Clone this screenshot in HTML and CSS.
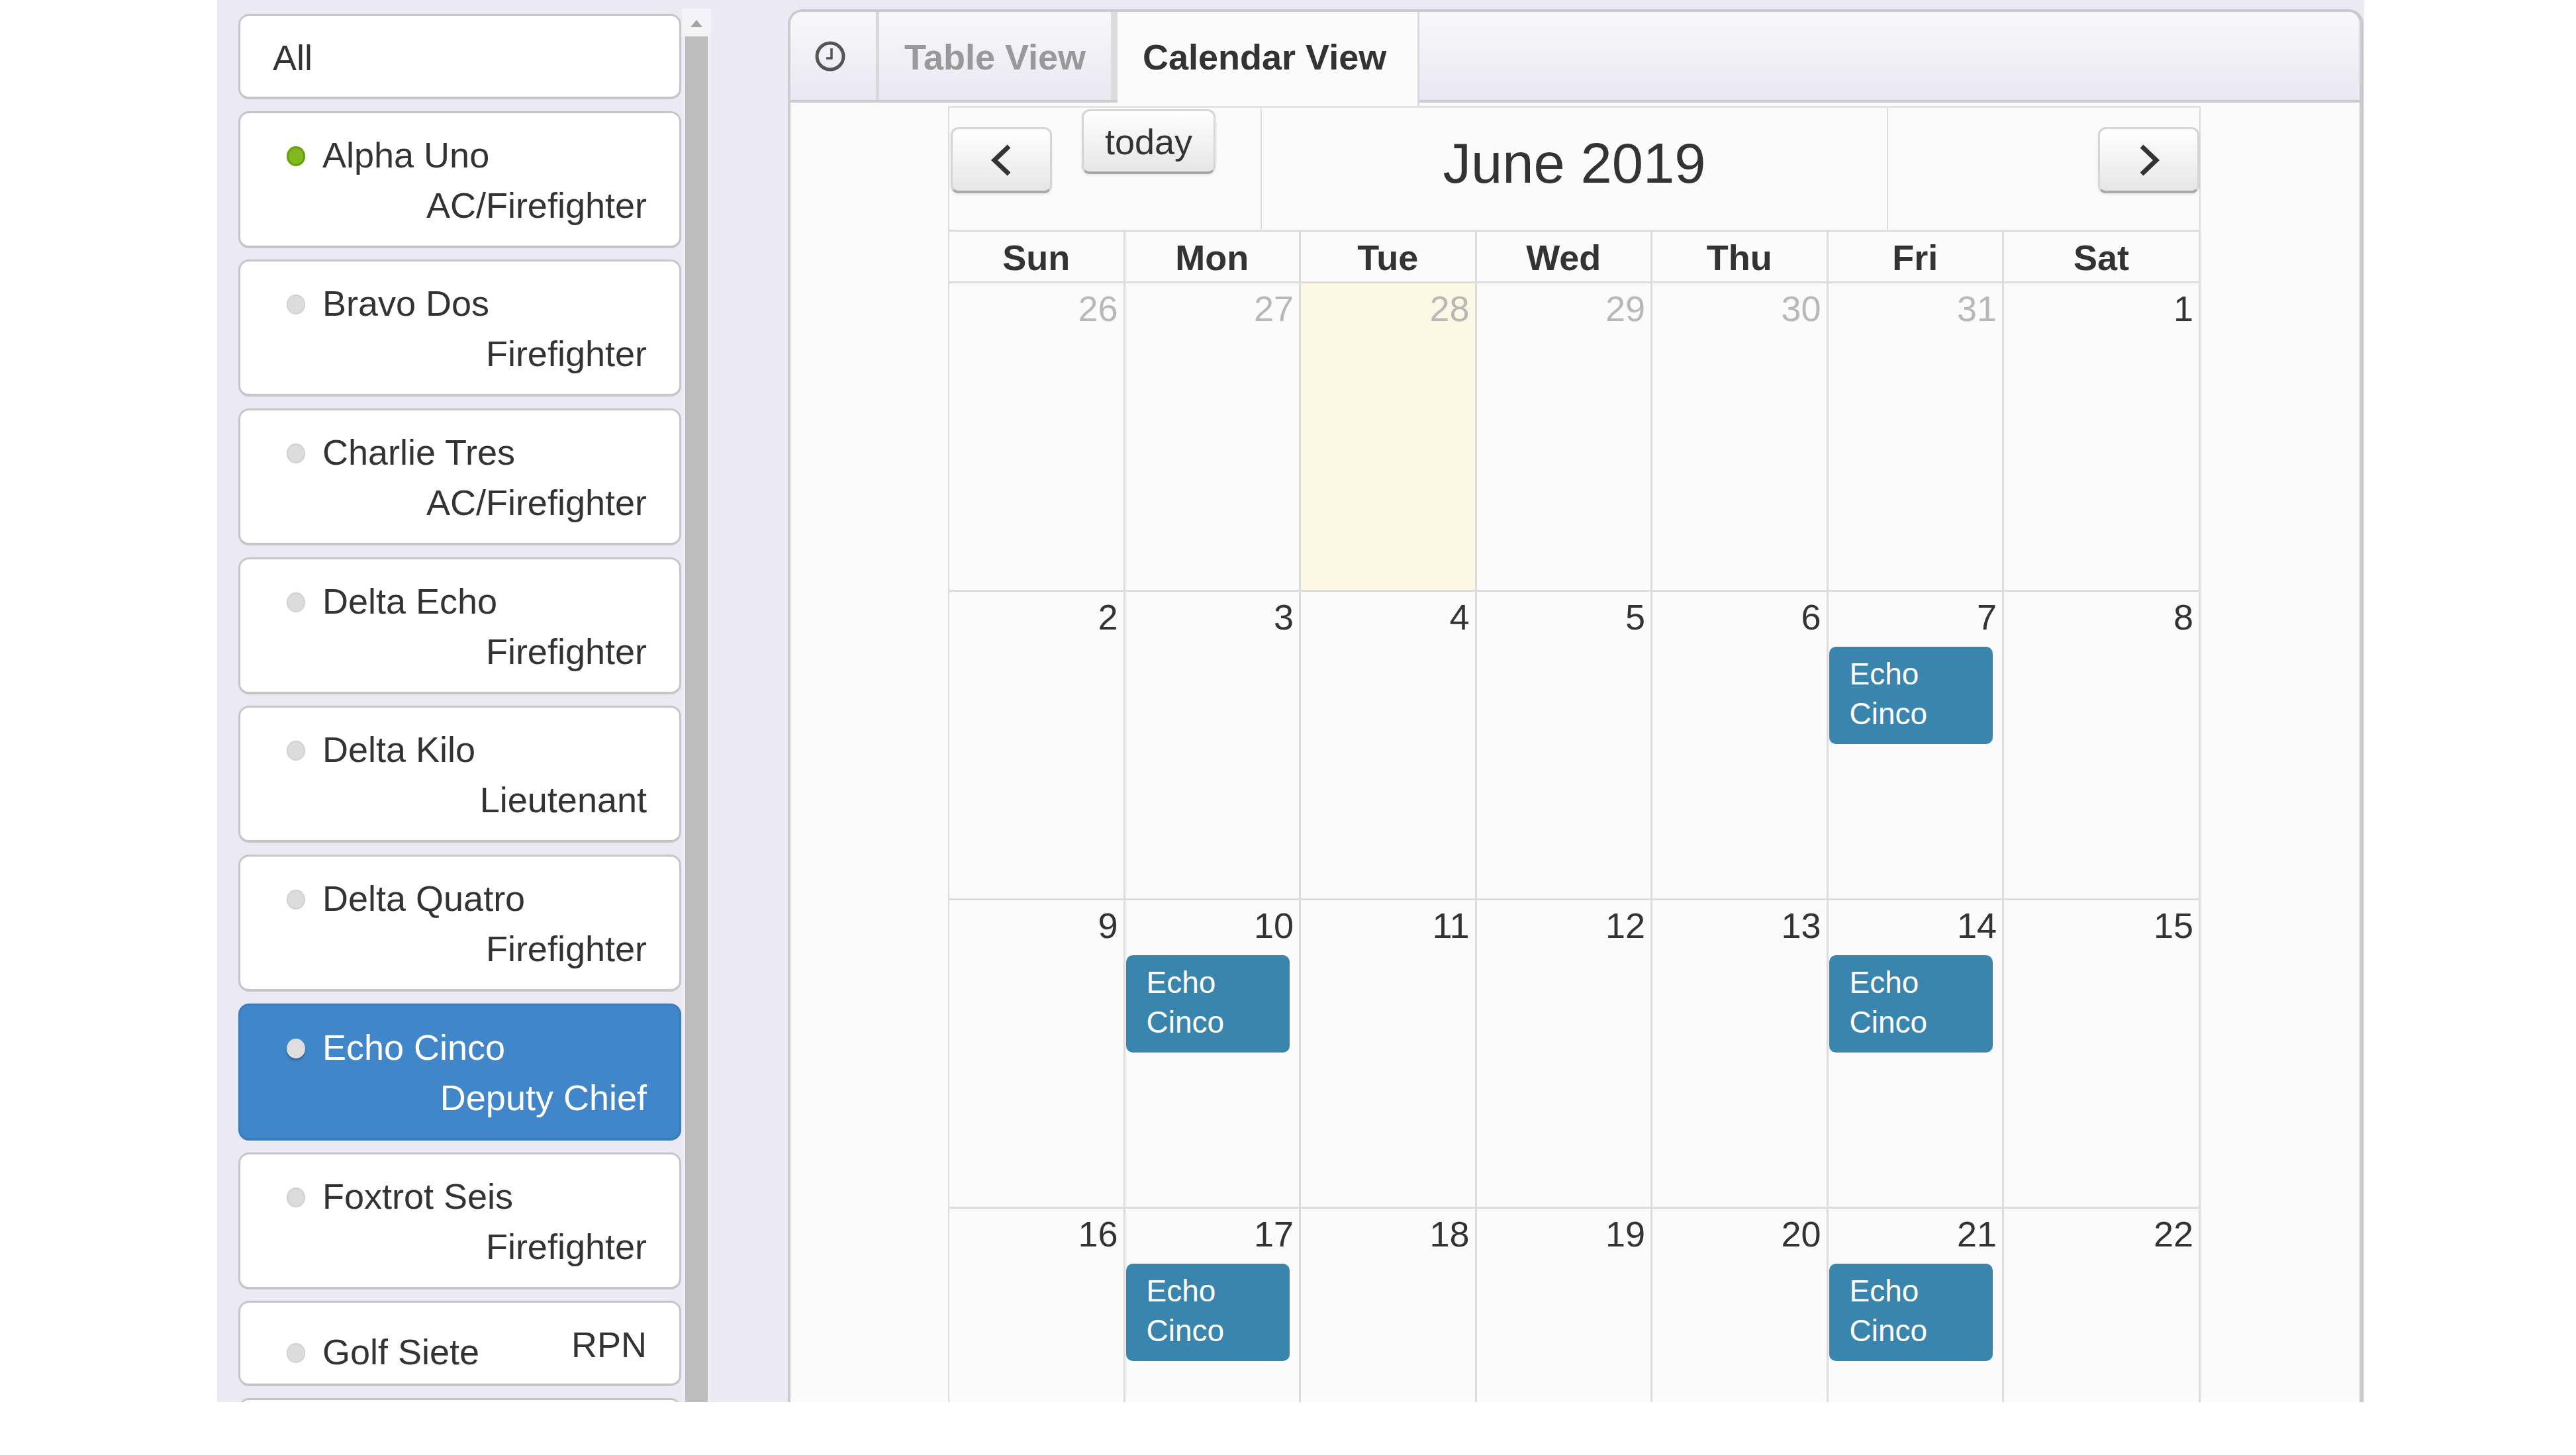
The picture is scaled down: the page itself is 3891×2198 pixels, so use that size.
FILE: index.html
```html
<!DOCTYPE html>
<html lang="en">
<head>
    <meta charset="UTF-8">
    <meta name="viewport" content="width=device-width, initial-scale=1.0">
    <title>Schedule</title>
    <link rel="stylesheet" href="styles.css">
</head>
<body>

    <div class="app">
        <div class="people">
            <div class="person person-inline"><span>All</span></div>

            <div class="person">
                <div class="name-row"><span class="dot dot-on"></span><span>Alpha Uno</span></div>
                <div class="role">AC/Firefighter</div>
            </div>
            <div class="person">
                <div class="name-row"><span class="dot"></span><span>Bravo Dos</span></div>
                <div class="role">Firefighter</div>
            </div>
            <div class="person">
                <div class="name-row"><span class="dot"></span><span>Charlie Tres</span></div>
                <div class="role">AC/Firefighter</div>
            </div>
            <div class="person">
                <div class="name-row"><span class="dot"></span><span>Delta Echo</span></div>
                <div class="role">Firefighter</div>
            </div>
            <div class="person">
                <div class="name-row"><span class="dot"></span><span>Delta Kilo</span></div>
                <div class="role">Lieutenant</div>
            </div>
            <div class="person">
                <div class="name-row"><span class="dot"></span><span>Delta Quatro</span></div>
                <div class="role">Firefighter</div>
            </div>
            <div class="person person-selected">
                <div class="name-row"><span class="dot"></span><span>Echo Cinco</span></div>
                <div class="role">Deputy Chief</div>
            </div>
            <div class="person">
                <div class="name-row"><span class="dot"></span><span>Foxtrot Seis</span></div>
                <div class="role">Firefighter</div>
            </div>
            <div class="person person-inline">
                <div class="name-row"><span class="dot"></span><span>Golf Siete</span></div>
                <div>RPN</div>
            </div>
            <div class="person person-inline"></div>
        </div>

        <div class="scrollbar">
            <div class="scroll-up"><span class="scroll-arrow"></span></div>
            <div class="scroll-thumb"></div>
        </div>

        <div class="panel">
            <div class="tabs">
                <div class="tab-icon">
                    <svg class="clock" viewBox="0 0 46 46">
                        <circle cx="23" cy="23" r="20" fill="none" stroke="#555" stroke-width="5"/>
                        <path d="M25 11V26H17" fill="none" stroke="#555" stroke-width="3.5"/>
                    </svg>
                </div>
                <div class="tab">Table View</div>
                <div class="tab tab-active">Calendar View</div>
            </div>

            <div class="calendar">
                <div class="toolbar">
                    <div class="toolbar-left">
                        <button class="btn btn-nav">
                            <svg class="chevron" viewBox="0 0 36 50"><path d="M29 4L7 25L29 46" fill="none" stroke="#333" stroke-width="7"/></svg>
                        </button>
                        <button class="btn btn-today">today</button>
                    </div>
                    <div class="toolbar-title">June 2019</div>
                    <div class="toolbar-right">
                        <button class="btn btn-nav">
                            <svg class="chevron" viewBox="0 0 36 50"><path d="M7 4L29 25L7 46" fill="none" stroke="#333" stroke-width="7"/></svg>
                        </button>
                    </div>
                </div>

                <div class="cal-row cal-head">
                    <div class="cell">Sun</div>
                    <div class="cell">Mon</div>
                    <div class="cell">Tue</div>
                    <div class="cell">Wed</div>
                    <div class="cell">Thu</div>
                    <div class="cell">Fri</div>
                    <div class="cell">Sat</div>
                </div>

                <div class="cal-row week">
                    <div class="cell other">26</div>
                    <div class="cell other">27</div>
                    <div class="cell other today">28</div>
                    <div class="cell other">29</div>
                    <div class="cell other">30</div>
                    <div class="cell other">31</div>
                    <div class="cell">1</div>
                </div>
                <div class="cal-row week">
                    <div class="cell">2</div>
                    <div class="cell">3</div>
                    <div class="cell">4</div>
                    <div class="cell">5</div>
                    <div class="cell">6</div>
                    <div class="cell">7<div class="event">Echo Cinco</div></div>
                    <div class="cell">8</div>
                </div>
                <div class="cal-row week">
                    <div class="cell">9</div>
                    <div class="cell">10<div class="event">Echo Cinco</div></div>
                    <div class="cell">11</div>
                    <div class="cell">12</div>
                    <div class="cell">13</div>
                    <div class="cell">14<div class="event">Echo Cinco</div></div>
                    <div class="cell">15</div>
                </div>
                <div class="cal-row week">
                    <div class="cell">16</div>
                    <div class="cell">17<div class="event">Echo Cinco</div></div>
                    <div class="cell">18</div>
                    <div class="cell">19</div>
                    <div class="cell">20</div>
                    <div class="cell">21<div class="event">Echo Cinco</div></div>
                    <div class="cell">22</div>
                </div>
            </div>
        </div>
    </div>

</body>
</html>
```

FILE: styles.css
```css
* {
    box-sizing: border-box;
}
body {
    margin: 0;
    background: #fff;
    font-family: "Liberation Sans", Arial, sans-serif;
    font-size: 54px;
    color: #333;
}
.app {
    display: flex;
    align-items: flex-start;
    width: 3243px;
    height: 2118px;
    margin-left: 328px;
    background: #ebeaf4;
    overflow: hidden;
}

/* people list */
.people {
    flex: none;
    display: flex;
    flex-direction: column;
    gap: 17.7px;
    width: 669px;
    margin: 21px 0 0 32px;
}
.person {
    flex: none;
    height: 207px;
    padding: 25px 49px 0;
    background: #fff;
    border: 3px solid #c6c6c6;
    border-bottom-width: 4px;
    border-radius: 16px;
    line-height: 76px;
}
.person-inline {
    display: flex;
    justify-content: space-between;
    height: 129px;
}
.person-selected {
    background: #4086c8;
    border-color: #3b7dbb;
    color: #fff;
}
.name-row {
    display: flex;
    align-items: center;
    padding-left: 21px;
}
.dot {
    flex: none;
    width: 28px;
    height: 30px;
    margin: 4px 26px 0 0;
    border-radius: 50%;
    background: #dcdcdc;
    box-shadow: inset 0 0 0 2px #d2d2d2;
}
.dot-on {
    background: #80b81e;
    box-shadow: inset 0 0 0 3px #68a010;
}
.person-selected .dot {
    background: #dedede;
    box-shadow: 0 3px 3px rgba(0, 0, 0, 0.25);
}
.role {
    text-align: right;
}

/* scrollbar */
.scrollbar {
    flex: none;
    display: flex;
    flex-direction: column;
    align-items: center;
    align-self: stretch;
    width: 44px;
    margin: 13px 0 0 1px;
    background: #eeedf6;
}
.scroll-up {
    display: flex;
    justify-content: center;
    width: 100%;
    height: 42px;
    padding-top: 17px;
    background: #f4f4f6;
}
.scroll-arrow {
    width: 0;
    height: 0;
    border: 9px solid transparent;
    border-top: 0;
    border-bottom: 11px solid #a4a4a4;
}
.scroll-thumb {
    flex: 1;
    width: 34px;
    background: #bebebe;
}

/* calendar panel */
.panel {
    flex: none;
    align-self: stretch;
    width: 2380px;
    margin: 14px 0 0 116px;
    background: #fbfbfb;
    border: 4px solid #cbcbcf;
    border-bottom: 0;
    border-right-width: 6px;
    border-radius: 22px 22px 0 0;
}
.tabs {
    display: flex;
    height: 137px;
    background: linear-gradient(#f8f8fb, #e9e8f3);
    border-bottom: 4px solid #cccccc;
    border-radius: 18px 18px 0 0;
}
.tab-icon {
    display: flex;
    align-items: center;
    justify-content: center;
    width: 134px;
    padding: 0 10px 0 0;
    border-right: 5px solid #d8d8d8;
}
.clock {
    width: 46px;
    height: 46px;
}
.tab {
    width: 360px;
    padding: 30px 0 0 38px;
    font-weight: bold;
    line-height: 76px;
    color: #999;
    border-right: 10px solid #dcdcdc;
}
.tab-active {
    width: 456px;
    height: 142px;
    color: #333;
    background: #fbfbfb;
    border-right-width: 3px;
}
.calendar {
    width: 1892px;
    margin: 5px 0 0 238px;
    border-left: 2px solid #dddddd;
}
.toolbar {
    display: grid;
    grid-template-columns: 470px 948px 1fr;
    height: 187px;
    border-top: 3px solid #e4e4e4;
    border-right: 2px solid #dddddd;
}
.toolbar-left {
    display: flex;
    align-items: flex-start;
    padding-left: 2px;
}
.toolbar-title {
    padding-top: 34px;
    font-size: 85px;
    line-height: 100px;
    text-align: center;
    border-left: 2px solid #dddddd;
    border-right: 2px solid #dddddd;
}
.toolbar-right {
    display: flex;
    justify-content: flex-end;
}
.btn {
    display: flex;
    align-items: center;
    justify-content: center;
    padding: 0;
    background: linear-gradient(#ffffff, #e6e6e6);
    border: 3px solid #d6d6d6;
    border-bottom: 4px solid #a8a8a8;
    border-radius: 12px;
    box-shadow: 0 2px 4px rgba(0, 0, 0, 0.08);
    font-family: inherit;
    font-size: 54px;
    color: #333;
}
.btn-nav {
    width: 153px;
    height: 100px;
    margin-top: 29px;
}
.btn-today {
    width: 202px;
    height: 98px;
    margin: 2px 0 0 45px;
}
.chevron {
    width: 36px;
    height: 50px;
}
.cal-row {
    display: grid;
    grid-template-columns: repeat(6, 265.5px) 1fr;
}
.cell {
    border-right: 3px solid #dddddd;
}
.cal-head {
    height: 81px;
    border-top: 3px solid #dddddd;
    border-bottom: 3px solid #dddddd;
    font-weight: bold;
    line-height: 78px;
    text-align: center;
}
.week {
    height: 466px;
    border-bottom: 3px solid #dddddd;
    line-height: 76px;
    text-align: right;
}
.week .cell {
    padding-right: 8px;
}
.other {
    color: #b8b8b8;
}
.today {
    background: #fcf8e3;
}
.event {
    width: 247px;
    height: 147px;
    margin: 7px 0 0 1px;
    padding: 11px 90px 0 31px;
    background: #3a85ad;
    border-radius: 10px;
    font-size: 46px;
    line-height: 60px;
    text-align: left;
    color: #fff;
}
```
